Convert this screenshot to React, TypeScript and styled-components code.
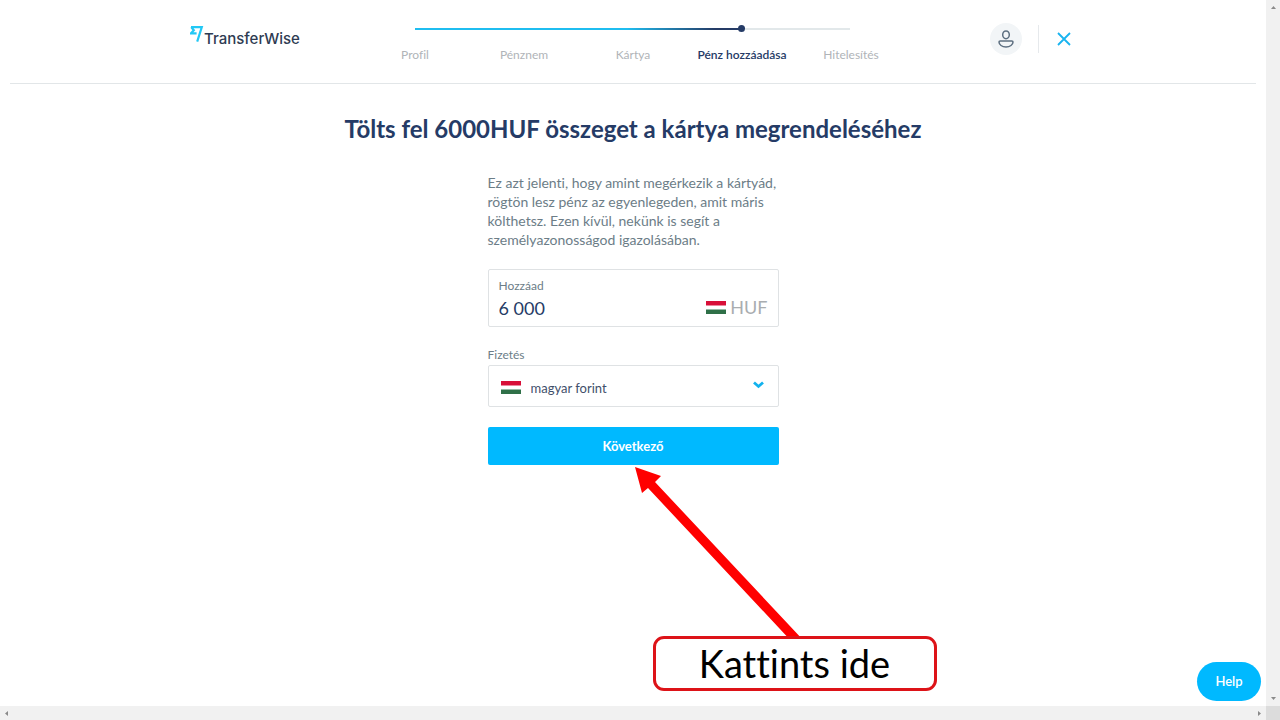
import React from "react";
import styled, { createGlobalStyle } from "styled-components";

const cyan = "#00b9ff";
const navy = "#253b66";
const slate = "#6c7d87";
const ui = `Lato, "Noto Sans", sans-serif`;

const GlobalStyle = createGlobalStyle`
  *, *::before, *::after { box-sizing: border-box; }
  html { overflow: hidden; }
  body { margin: 0; background: #fff; color: ${navy}; font-family: ${ui}; font-variant-ligatures: none; }
  h1, p, ol { margin: 0; padding: 0; }
`;

const Window = styled.div`
  display: grid;
  grid-template-columns: minmax(0, 1fr) 14px;
  grid-template-rows: minmax(0, 1fr) 14px;
  min-height: 100vh;
`;

const Page = styled.div`
  position: relative;
`;

const ScrollBar = styled.div<{ $vertical?: boolean }>`
  display: flex;
  flex-direction: ${(p) => (p.$vertical ? "column" : "row")};
  align-items: center;
  justify-content: space-between;
  padding: ${(p) => (p.$vertical ? "5px 0" : "0 4px")};
  background: #f1f1f1;
`;

const ScrollCorner = styled.div`
  background: #dcdcdc;
`;

const Header = styled.header`
  margin: 0 10px;
  border-bottom: 1px solid #e2e6e8;
`;

const HeaderInner = styled.div`
  display: grid;
  grid-template-columns: 1fr auto 1fr;
  align-items: start;
  max-width: 886px;
  height: 83px;
  margin: 0 auto;
`;

const Brand = styled.a`
  display: flex;
  padding-top: 26px;
  color: #2e3b52;
  text-decoration: none;
`;

const BrandName = styled.span`
  padding-top: 3px;
  font: 500 15px/20px Inter, sans-serif;
`;

const Stepper = styled.nav`
  position: relative;
  padding-top: 28px;
`;

const Steps = styled.ol`
  display: grid;
  grid-template-columns: repeat(5, 109px);
  list-style: none;
`;

const Step = styled.li<{ $state: "done" | "current" | "next" }>`
  padding-top: 18px;
  text-align: center;
  font-size: 12px;
  line-height: 18px;
  font-weight: ${(p) => (p.$state === "current" ? 600 : 400)};
  color: ${(p) => (p.$state === "current" ? navy : "#b0b4b8")};
`;

const Track = styled.div`
  position: absolute;
  top: 28px;
  left: 54px;
  right: 56px;
  height: 2px;
  background: #e2e8ea;
`;

const Progress = styled.div`
  position: relative;
  width: 75%;
  height: 2px;
  background: linear-gradient(90deg, #1fbdf0 65%, ${navy} 92%);
  &::after {
    content: "";
    position: absolute;
    right: -4px;
    top: -3px;
    width: 7px;
    height: 7px;
    border-radius: 50%;
    background: ${navy};
  }
`;

const Actions = styled.div`
  display: flex;
  align-items: center;
  justify-content: flex-end;
  padding-top: 23px;
`;

const IconButton = styled.button<{ $round?: boolean }>`
  display: grid;
  place-items: center;
  width: ${(p) => (p.$round ? 32 : 24)}px;
  height: ${(p) => (p.$round ? 32 : 24)}px;
  padding: 0;
  border: 0;
  border-radius: 50%;
  background: ${(p) => (p.$round ? "#f2f5f7" : "transparent")};
`;

const Divider = styled.span`
  width: 1px;
  height: 28px;
  margin: 0 13px 0 16px;
  background: #e6e9ec;
`;

const Main = styled.main`
  padding: 31px 16px 0;
`;

const Title = styled.h1`
  text-align: center;
  font-size: 24px;
  line-height: 28px;
  font-weight: 700;
`;

const Form = styled.form`
  position: relative;
  width: 100%;
  max-width: 291px;
  margin: 30px auto 0;
`;

const Intro = styled.p`
  color: ${slate};
  font-size: 14px;
  line-height: 19px;
  white-space: nowrap;
`;

const AmountBox = styled.div`
  display: grid;
  grid-template-columns: minmax(0, 1fr) auto;
  align-items: start;
  height: 58px;
  margin-top: 20px;
  padding: 7px 10px 6px;
  border: 1px solid #dfe2e4;
  border-radius: 2px;
`;

const Label = styled.label`
  display: block;
  color: ${slate};
  font-size: 12px;
  line-height: 18px;
`;

const AmountInput = styled.input`
  grid-column: 1;
  width: 100%;
  height: 26px;
  padding: 0;
  border: 0;
  outline: 0;
  background: none;
  color: ${navy};
  font: 400 18px/26px ${ui};
`;

const Currency = styled.span`
  display: flex;
  align-items: center;
  gap: 4px;
  color: #a9adb0;
  font-size: 18px;
  line-height: 24px;
`;

const PayLabel = styled(Label)`
  margin-top: 19px;
`;

const SelectBox = styled.div`
  position: relative;
  margin-top: 1px;
`;

const Select = styled.select`
  appearance: none;
  display: block;
  width: 100%;
  height: 42px;
  padding: 3px 40px 0 42px;
  border: 1px solid #dfe2e4;
  border-radius: 2px;
  background: #fff;
  color: #3f4f6b;
  font: 400 13px/20px ${ui};
`;

const SelectIcon = styled.span<{ $end?: boolean }>`
  position: absolute;
  top: 0;
  bottom: 0;
  ${(p) => (p.$end ? "right: 15px;" : "left: 13px; padding-top: 2px;")}
  display: flex;
  align-items: center;
  pointer-events: none;
`;

const Submit = styled.button`
  display: block;
  width: 100%;
  height: 38px;
  margin-top: 20px;
  padding: 0;
  border: 0;
  border-radius: 2px;
  background: ${cyan};
  color: #fff;
  font: 700 13px/20px ${ui};
`;

const Callout = styled.aside`
  position: absolute;
  top: 100%;
  left: 147px;
`;

const CalloutBox = styled.div`
  position: relative;
  width: 284px;
  margin: -7px 0 0 18px;
  border: 3px solid #dd1318;
  border-radius: 11px;
  background: #fff;
  color: #000;
  text-align: center;
  font-size: 38px;
  line-height: 49px;
`;

const Help = styled.button`
  position: absolute;
  right: 5px;
  bottom: 5px;
  width: 64px;
  height: 39px;
  padding: 0 0 2px;
  border: 0;
  border-radius: 20px;
  background: ${cyan};
  color: #fff;
  font: 600 13px/20px ${ui};
`;

const Flag = () => (
  <svg width="20" height="13" viewBox="0 0 20 13" aria-hidden="true">
    <path fill="#fff" d="M0 0h20v13H0z" />
    <path fill="#d80f38" d="M0 0h20v4.500H0z" />
    <path fill="#2f7048" d="M0 8.500h20v4.500H0z" />
  </svg>
);

const Arrow = ({ d }: { d: string }) => (
  <svg width="5" height="5" viewBox="0 0 5 5" aria-hidden="true">
    <path d={d} fill="#8a8a8a" />
  </svg>
);

const steps = [
  { name: "Profil", state: "done" },
  { name: "Pénznem", state: "done" },
  { name: "Kártya", state: "done" },
  { name: "Pénz hozzáadása", state: "current" },
  { name: "Hitelesítés", state: "next" },
] as const;

export default function App() {
  return (
    <>
      <GlobalStyle />
      <Window>
        <Page>
          <Header>
            <HeaderInner>
              <Brand href="#">
                <svg width="14" height="16" viewBox="0 0 14 16" aria-hidden="true">
                  <path d="M1 1.100h10.800L7.200 15.600M1.200 1.100l2.600 3.100L1 7.300h5.600" fill="none" stroke="#22c8f5" strokeWidth="2.200" />
                </svg>
                <BrandName>TransferWise</BrandName>
              </Brand>
              <Stepper aria-label="Lépések">
                <Track>
                  <Progress />
                </Track>
                <Steps>
                  {steps.map((s) => (
                    <Step key={s.name} $state={s.state} aria-current={s.state === "current" ? "step" : undefined}>
                      {s.name}
                    </Step>
                  ))}
                </Steps>
              </Stepper>
              <Actions>
                <IconButton $round type="button" aria-label="Fiók">
                  <svg width="16" height="18" viewBox="0 0 16 18" fill="none" stroke="#5d6f80" strokeWidth="1.5">
                    <ellipse cx="8" cy="4.800" rx="3.300" ry="3.900" />
                    <path d="M2.200 11h11.600c.8 0 1.200.4 1.200 1 0 2.800-3 4.900-7 4.900s-7-2.100-7-4.900c0-.6.400-1 1.200-1z" />
                  </svg>
                </IconButton>
                <Divider />
                <IconButton type="button" aria-label="Bezárás">
                  <svg width="14" height="14" viewBox="0 0 14 14" stroke="#19b4f0" strokeWidth="1.800">
                    <path d="M1 1l12 12M13 1L1 13" />
                  </svg>
                </IconButton>
              </Actions>
            </HeaderInner>
          </Header>
          <Main>
            <Title>Tölts fel 6000HUF összeget a kártya megrendeléséhez</Title>
            <Form onSubmit={(e) => e.preventDefault()}>
              <Intro>
                Ez azt jelenti, hogy amint megérkezik a kártyád,
                <br />
                rögtön lesz pénz az egyenlegeden, amit máris
                <br />
                költhetsz. Ezen kívül, nekünk is segít a
                <br />
                személyazonosságod igazolásában.
              </Intro>
              <AmountBox>
                <Label htmlFor="amount">Hozzáad</Label>
                <AmountInput id="amount" defaultValue="6 000" inputMode="numeric" />
                <Currency>
                  <Flag />
                  HUF
                </Currency>
              </AmountBox>
              <PayLabel htmlFor="currency">Fizetés</PayLabel>
              <SelectBox>
                <Select id="currency" defaultValue="huf">
                  <option value="huf">magyar forint</option>
                </Select>
                <SelectIcon>
                  <Flag />
                </SelectIcon>
                <SelectIcon $end>
                  <svg width="11" height="12" viewBox="0 0 11 12" fill="none" stroke="#12b2ee" strokeWidth="2.800">
                    <path d="M1 2.500l4.500 4L10 2.500" />
                  </svg>
                </SelectIcon>
              </SelectBox>
              <Submit type="submit">Következő</Submit>
              <Callout>
                <svg width="172" height="178" viewBox="0 0 172 178" display="block" aria-hidden="true">
                  <path d="M0 2l26 9-6 6L169 176l-11 2L13 23l-6 5z" fill="#f00" />
                </svg>
                <CalloutBox>Kattints ide</CalloutBox>
              </Callout>
            </Form>
          </Main>
          <Help type="button">Help</Help>
        </Page>
        <ScrollBar $vertical>
          <Arrow d="M0 4h5L2.500 1z" />
          <Arrow d="M0 1h5L2.500 4z" />
        </ScrollBar>
        <ScrollBar>
          <Arrow d="M4 0v5L1 2.500z" />
          <Arrow d="M1 0v5l3-2.500z" />
        </ScrollBar>
        <ScrollCorner />
      </Window>
    </>
  );
}
